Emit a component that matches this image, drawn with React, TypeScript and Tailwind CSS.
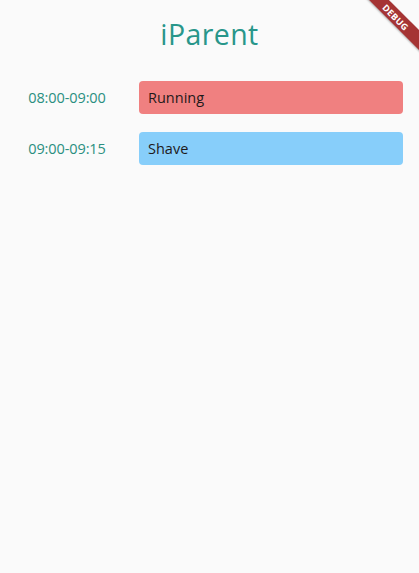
const rows = [
  { time: '08:00-09:00', title: 'Running', color: 'bg-[#f08080]' },
  { time: '09:00-09:15', title: 'Shave', color: 'bg-[#87cefa]' },
]

export default function App() {
  return (
    <div
      className="relative h-[573px] w-[419px] overflow-hidden bg-[#fafafa]"
      style={{ fontFamily: '"Open Sans", "Noto Sans", sans-serif' }}
    >
      <h1 className="pt-[12px] text-center text-[28.5px] font-normal leading-[44px] tracking-[0.4px] text-[#28968a]">
        iParent
      </h1>

      <div className="mt-[25px] flex flex-col gap-[18px] pr-[16px]">
        {rows.map(row => (
          <div key={row.time} className="flex items-center">
            <div className="w-[134px] text-center text-[14.5px] tracking-[-0.1px] text-[#2a8f80]">{row.time}</div>
            <div className={`ml-[5px] flex h-[33px] flex-1 items-center rounded-[4px] px-[9px] text-[14.5px] text-[#1f1a1a] ${row.color}`}>
              {row.title}
            </div>
          </div>
        ))}
      </div>

      {/* debug banner */}
      <div className="absolute right-[-32px] top-[10px] flex h-[14px] w-[110px] rotate-45 items-center justify-center bg-[#a53434] shadow-[0_1px_2px_rgba(0,0,0,0.3)]">
        <span className="text-[9px] font-bold leading-none tracking-[0.3px] text-white">DEBUG</span>
      </div>
    </div>
  )
}
